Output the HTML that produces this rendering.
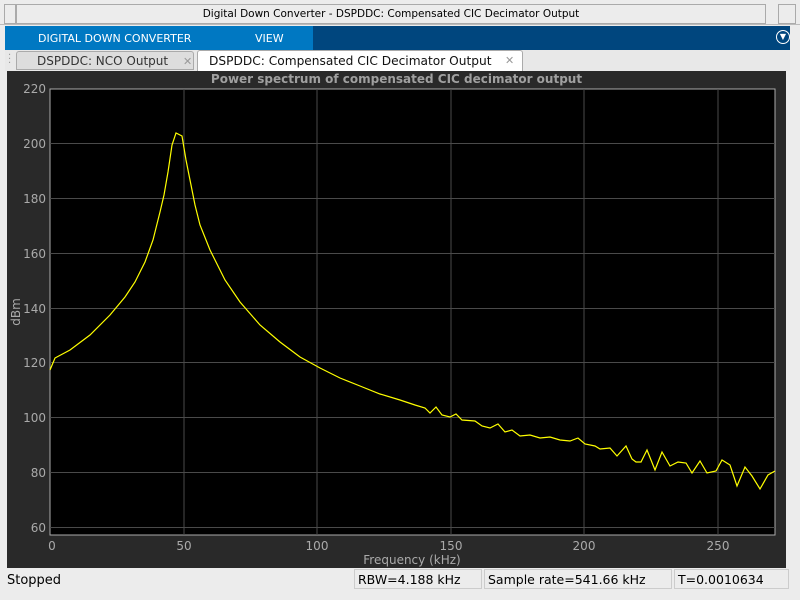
<!DOCTYPE html>
<html><head><style>
body{margin:0;width:800px;height:600px;background:#ececec;font-family:"DejaVu Sans","Liberation Sans",sans-serif;position:relative;overflow:hidden}
.a{position:absolute}
</style></head><body>
<div class="a" style="left:0;top:0;width:800px;height:24px;background:#ececec;border-bottom:1px solid #bbb"></div>
<div class="a" style="left:4px;top:4px;width:10px;height:18px;border:1px solid #aaa"></div>
<div class="a" style="left:16px;top:4px;width:748px;height:18px;border:1px solid #aaa;font-size:10.5px;text-align:center;line-height:18px;color:#000">Digital Down Converter - DSPDDC: Compensated CIC Decimator Output</div>
<div class="a" style="left:778px;top:4px;width:16px;height:18px;border:1px solid #aaa"></div>
<div class="a" style="left:5px;top:26px;width:785px;height:24px;background:#00467e"></div>
<div class="a" style="left:5px;top:26px;width:308px;height:24px;background:#0078c2"></div>
<div class="a" style="left:38px;top:26px;line-height:26px;font-size:11px;color:#fff">DIGITAL DOWN CONVERTER</div>
<div class="a" style="left:255px;top:26px;line-height:26px;font-size:11px;color:#fff">VIEW</div>
<div class="a" style="left:776px;top:30px;width:12px;height:12px;border:1px solid #fff;border-radius:50%;color:#fff;font-size:8px;text-align:center;line-height:12px">▼</div>
<div class="a" style="left:5px;top:50px;width:785px;height:21px;background:#e8e8e8"></div>
<div class="a" style="left:8px;top:54px;color:#999;font-size:10px;line-height:4px">·<br>·<br>·</div>
<div class="a" style="left:16px;top:51px;width:178px;height:19px;background:#ddd;border:1px solid #aaa;border-radius:3px 3px 0 0;font-size:12px;color:#333;line-height:19px;padding-left:20px;box-sizing:border-box">DSPDDC: NCO Output<span style="position:absolute;left:166px;color:#999;font-size:11px">✕</span></div>
<div class="a" style="left:197px;top:50px;width:326px;height:21px;background:#fff;border:1px solid #aaa;border-bottom:none;border-radius:3px 3px 0 0;font-size:12.2px;color:#111;line-height:20px;padding-left:11px;box-sizing:border-box">DSPDDC: Compensated CIC Decimator Output<span style="position:absolute;left:307px;color:#999;font-size:11px">✕</span></div>
<div class="a" style="left:7px;top:71px;width:779px;height:497px;background:#292929"></div>
<div class="a" style="left:7px;top:72px;width:779px;text-align:center;font-size:12px;font-weight:bold;color:#a0a0a0">Power spectrum of compensated CIC decimator output</div>
<svg class="a" style="left:0;top:0" width="800" height="600">
<rect x="50" y="89" width="725" height="446" fill="#000" stroke="#aaa" stroke-width="1"/>
<g stroke="#4a4a4a" stroke-width="1">
<line x1="184" y1="89" x2="184" y2="535"/><line x1="317" y1="89" x2="317" y2="535"/><line x1="451" y1="89" x2="451" y2="535"/><line x1="584" y1="89" x2="584" y2="535"/><line x1="718" y1="89" x2="718" y2="535"/>
<line x1="50" y1="143.5" x2="775" y2="143.5"/><line x1="50" y1="198.5" x2="775" y2="198.5"/><line x1="50" y1="253.5" x2="775" y2="253.5"/><line x1="50" y1="308.5" x2="775" y2="308.5"/><line x1="50" y1="362.5" x2="775" y2="362.5"/><line x1="50" y1="417.5" x2="775" y2="417.5"/><line x1="50" y1="472.5" x2="775" y2="472.5"/><line x1="50" y1="527.5" x2="775" y2="527.5"/>
</g>
<polyline fill="none" stroke="#ffff00" stroke-width="1.2" points="50,370 55,358 70,350 90,335 110,315 125,297 135,282 145,262 153,240 160,212 164,195 168,172 172,145 176,133 182,136 186,160 190,180 195,205 200,225 210,250 225,280 240,302 260,325 280,342 300,357 320,368 340,378 360,386 380,394 400,400 415,405 425,408 430,413 436,407 442,415 450,417 456,414 462,420 475,421 482,426 490,428 498,424 505,432 512,430 520,436 530,435 540,438 550,437 560,440 570,441 578,438 585,444 595,446 600,449 610,448 617,456 626,446 632,459 636,462 641,462 647,450 655,470 662,452 670,466 678,462 686,463 692,473 700,461 707,473 716,471 722,460 730,465 737,486 745,467 752,476 760,489 768,475 775,471"/>
<g fill="#aaa" font-size="12" font-family="DejaVu Sans,Liberation Sans,sans-serif" text-anchor="end">
<text x="46" y="93">220</text><text x="46" y="148">200</text><text x="46" y="203">180</text><text x="46" y="258">160</text><text x="46" y="313">140</text><text x="46" y="367">120</text><text x="46" y="422">100</text><text x="46" y="477">80</text><text x="46" y="532">60</text>
</g>
<g fill="#aaa" font-size="12" font-family="DejaVu Sans,Liberation Sans,sans-serif" text-anchor="middle">
<text x="52" y="550">0</text><text x="184" y="550">50</text><text x="317" y="550">100</text><text x="451" y="550">150</text><text x="584" y="550">200</text><text x="718" y="550">250</text>
<text x="412" y="564">Frequency (kHz)</text>
<text transform="translate(20,312) rotate(-90)">dBm</text>
</g>
</svg>
<div class="a" style="left:7px;top:573px;font-size:13px;color:#000">Stopped</div>
<div class="a" style="left:354px;top:569px;width:128px;height:20px;border:1px solid #ccc;font-size:12.5px;line-height:20px;padding-left:3px;box-sizing:border-box">RBW=4.188 kHz</div>
<div class="a" style="left:484px;top:569px;width:188px;height:20px;border:1px solid #ccc;font-size:12.5px;line-height:20px;padding-left:3px;box-sizing:border-box">Sample rate=541.66 kHz</div>
<div class="a" style="left:674px;top:569px;width:115px;height:20px;border:1px solid #ccc;font-size:12.5px;line-height:20px;padding-left:3px;box-sizing:border-box">T=0.0010634</div>
</body></html>
